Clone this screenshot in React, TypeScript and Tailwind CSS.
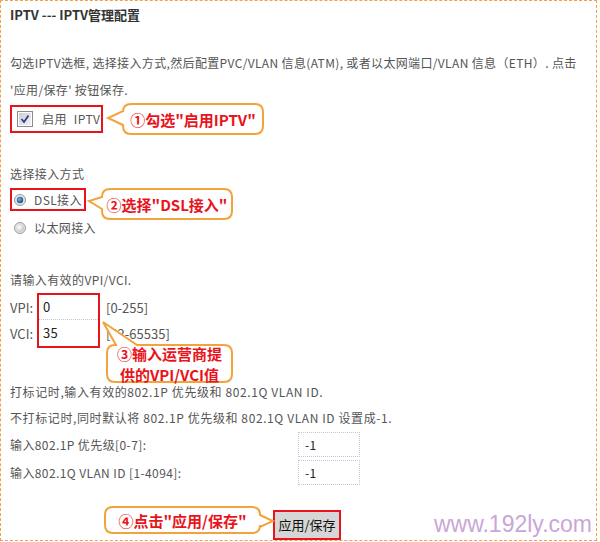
import React from 'react';

const font = { fontFamily: '"Noto Sans CJK SC", "Liberation Sans", sans-serif' };

type Side = 'left' | 'right' | 'top';

function calloutPath(w: number, h: number, side: Side, a: number, b: number, tx: number, ty: number) {
  const r = 8;
  if (side === 'left') {
    return `M ${r},0 H ${w - r} Q ${w},0 ${w},${r} V ${h - r} Q ${w},${h} ${w - r},${h} H ${r} Q 0,${h} 0,${h - r} V ${b} L ${tx},${ty} L 0,${a} V ${r} Q 0,0 ${r},0 Z`;
  }
  if (side === 'right') {
    return `M ${r},0 H ${w - r} Q ${w},0 ${w},${r} V ${a} L ${tx},${ty} L ${w},${b} V ${h - r} Q ${w},${h} ${w - r},${h} H ${r} Q 0,${h} 0,${h - r} V ${r} Q 0,0 ${r},0 Z`;
  }
  return `M 0,${r} Q 0,0 ${r},0 H ${a} L ${tx},${ty} L ${b},0 H ${w - r} Q ${w},0 ${w},${r} V ${h - r} Q ${w},${h} ${w - r},${h} H ${r} Q 0,${h} 0,${h - r} Z`;
}

function Callout({
  w,
  h,
  side,
  a,
  b,
  tx,
  ty,
  className,
  children,
}: {
  w: number;
  h: number;
  side: Side;
  a: number;
  b: number;
  tx: number;
  ty: number;
  className?: string;
  children: React.ReactNode;
}) {
  return (
    <div className={`relative shrink-0 ${className ?? ''}`} style={{ width: w, height: h }}>
      <svg className="absolute left-0 top-0 overflow-visible" width={w} height={h}>
        <path d={calloutPath(w, h, side, a, b, tx, ty)} fill="#fff" stroke="#f2a43a" strokeWidth="2" />
      </svg>
      <div className="relative flex h-full flex-col items-center justify-center text-[15px] font-bold leading-[21px] tracking-normal text-[#e8141c]">
        {children}
      </div>
    </div>
  );
}

function Checkbox() {
  return (
    <svg width="16" height="16" viewBox="0 0 16 16">
      <defs>
        <linearGradient id="cb" x1="0" y1="0" x2="1" y2="1">
          <stop offset="0" stopColor="#cfcfcf" />
          <stop offset="1" stopColor="#f4f4f4" />
        </linearGradient>
      </defs>
      <rect x="0.5" y="0.5" width="15" height="15" fill="#fff" stroke="#8c8c8c" />
      <rect x="2" y="2" width="12" height="12" fill="url(#cb)" />
      <path d="M4.5 8 L7 11 L11.5 4.5" fill="none" stroke="#2a3f9a" strokeWidth="1.8" />
    </svg>
  );
}

function Radio({ on }: { on: boolean }) {
  return (
    <svg width="12" height="12" viewBox="0 0 12 12">
      <defs>
        <radialGradient id={on ? 'ron' : 'roff'} cx="0.4" cy="0.4" r="0.6">
          <stop offset="0" stopColor={on ? '#6fb6f0' : '#ffffff'} />
          <stop offset="1" stopColor={on ? '#1d4f86' : '#c8c8c8'} />
        </radialGradient>
      </defs>
      <circle cx="6" cy="6" r="5.5" fill="#e6e6e6" stroke="#9a9a9a" />
      <circle cx="6" cy="6" r={on ? 3.2 : 4} fill={`url(#${on ? 'ron' : 'roff'})`} />
    </svg>
  );
}

export default function App() {
  return (
    <div className="h-[542px] w-[600px] bg-white" style={font}>
      <div className="relative h-[541px] w-[597px] border border-dashed border-[#f2a04a] pl-[9px] pr-[4px] text-[12px] tracking-[0.4px] text-[#555]">
        <div className="mt-[6px] text-[13px] font-bold leading-[16px] tracking-normal text-[#333]">IPTV --- IPTV管理配置</div>

        <div className="mt-[26px] leading-[27px] whitespace-nowrap tracking-[0.35px]">
          <div>勾选IPTV选框, 选择接入方式,然后配置PVC/VLAN 信息(ATM), 或者以太网端口/VLAN 信息（ETH）. 点击</div>
          <div>'应用/保存' 按钮保存.</div>
        </div>

        <div className="mt-[1px] flex h-[30px] items-center">
          <div className="flex h-[28px] w-[93px] items-center border-2 border-[#e8141c] pl-[5px]">
            <Checkbox />
            <span className="ml-[9px]">启用</span>
            <span className="ml-[7px]">IPTV</span>
          </div>
          <Callout w={140} h={30} side="left" a={7} b={21} tx={-15} ty={14} className="ml-[20px]">
            <span>①勾选"启用IPTV"</span>
          </Callout>
        </div>

        <div className="mt-[31px] leading-[18px]">选择接入方式</div>

        <div className="mt-[5px] flex h-[31px] items-start">
          <div className="flex h-[23px] w-[76px] items-center border-2 border-[#e8141c] pl-[2px]">
            <Radio on />
            <span className="ml-[8px]">DSL接入</span>
          </div>
          <Callout w={130} h={30} side="left" a={8} b={20} tx={-13} ty={12} className="ml-[16px] mt-[1px]">
            <span>②选择"DSL接入"</span>
          </Callout>
        </div>

        <div className="flex h-[18px] items-center pl-[4px]">
          <Radio on={false} />
          <span className="ml-[8px]">以太网接入</span>
        </div>

        <div className="mt-[34px] leading-[18px]">请输入有效的VPI/VCI.</div>

        <div className="relative mt-[4px] flex">
          <div className="flex w-[27px] flex-col pt-[2px] text-[13px] tracking-normal">
            <div className="flex h-[26px] items-center">VPI:</div>
            <div className="flex h-[26px] items-center">VCI:</div>
          </div>
          <div className="flex h-[55px] w-[63px] flex-col border-2 border-[#e8141c]">
            <div className="flex h-[25px] items-center border-b border-dotted border-[#b9c4d6] pl-[4px] text-[13px] text-[#222]">0</div>
            <div className="flex h-[26px] items-center pl-[4px] text-[13px] text-[#222]">35</div>
          </div>
          <div className="flex flex-col pl-[6px] pt-[2px] text-[13px] tracking-normal">
            <div className="flex h-[26px] items-center">[0-255]</div>
            <div className="flex h-[26px] items-center">[32-65535]</div>
          </div>
          <Callout w={125} h={37} side="top" a={9} b={30} tx={-4} ty={-23} className="!absolute left-[97px] top-[52px]">
            <span>③输入运营商提</span>
            <span>供的VPI/VCI值</span>
          </Callout>
        </div>

        <div className="mt-[31px] leading-[26px] tracking-[0.6px]">
          <div>打标记时,输入有效的802.1P 优先级和 802.1Q VLAN ID.</div>
          <div>不打标记时,同时默认将 802.1P 优先级和 802.1Q VLAN ID 设置成-1.</div>
        </div>

        <div className="mt-[1px] flex h-[25px] items-center">
          <div className="w-[288px]">输入802.1P 优先级[0-7]:</div>
          <div className="flex h-[25px] w-[62px] items-center border border-dotted border-[#c9c2dc] pl-[6px] text-[#222]">-1</div>
        </div>
        <div className="mt-[3px] flex h-[25px] items-center">
          <div className="w-[288px]">输入802.1Q VLAN ID [1-4094]:</div>
          <div className="flex h-[25px] w-[62px] items-center border border-dotted border-[#c9c2dc] pl-[6px] text-[#222]">-1</div>
        </div>

        <div className="mt-[22px] flex h-[33px] items-start">
          <Callout w={155} h={26} side="right" a={8} b={20} tx={168} ty={14} className="ml-[95px]">
            <span>④点击"应用/保存"</span>
          </Callout>
          <div className="ml-[13px] mt-[3px] flex h-[30px] w-[68px] items-center justify-center border-2 border-[#e8141c] bg-[#d6d6d6] text-[13px] tracking-normal text-[#111]">
            应用/保存
          </div>
          <div
            className="ml-auto mt-[2px] text-[23px] leading-[30px] tracking-normal text-[#caa6d8]"
            style={{ fontFamily: '"Liberation Sans", Arial, sans-serif' }}
          >
            www.192ly.com
          </div>
        </div>
      </div>
    </div>
  );
}
